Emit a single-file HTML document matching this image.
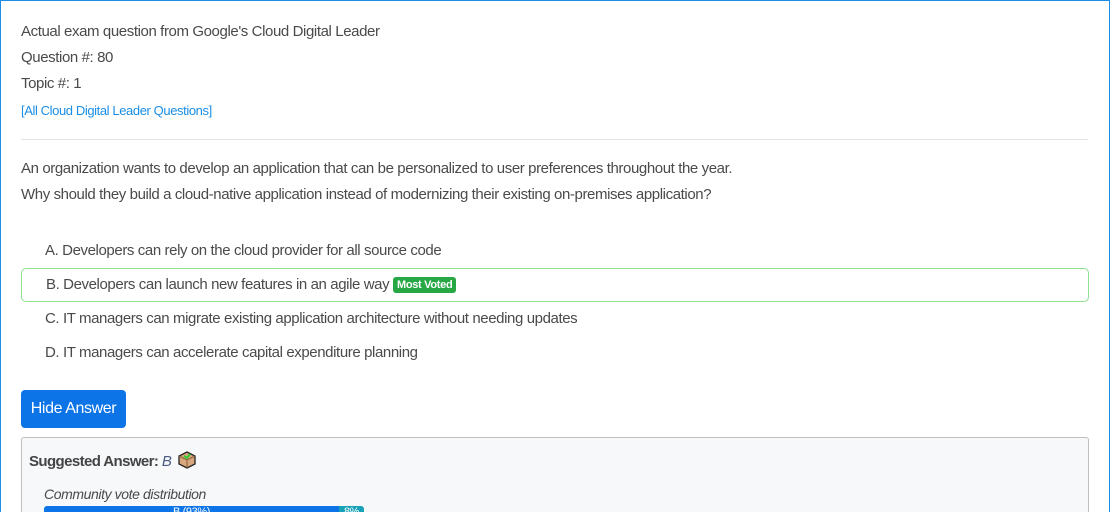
<!DOCTYPE html>
<html><head><meta charset="utf-8"><style>
*{margin:0;padding:0;box-sizing:border-box}
html,body{width:1110px;height:512px;overflow:hidden;background:#fff}
body{font-family:"Liberation Sans",sans-serif;color:#4a4a4a;font-size:15px;letter-spacing:-0.4px;position:relative}
.frame{position:absolute;left:0;top:0;width:1110px;height:512px;border:1px solid #1a8ee6;border-bottom:none}
.t{position:absolute;white-space:nowrap;line-height:18px}
a{color:#1a8ee6;text-decoration:none}
.hr{position:absolute;left:21px;top:139px;width:1067px;height:1px;background:#e2e2e2}
.opt{position:absolute;left:21px;width:1068px;height:34px;line-height:34px;padding-left:24px;white-space:nowrap}
.sel{border:1px solid #8fe08f;border-radius:5px;line-height:32px}
.badge{display:inline-block;background:#28a745;color:#fff;font-weight:bold;font-size:11px;line-height:16px;padding:0 4px;border-radius:3px;vertical-align:1px;letter-spacing:-0.3px}
.btn{position:absolute;left:21px;top:390px;width:105px;height:38px;background:#0d74e8;border-radius:4px;color:#fff;font-size:16px;line-height:38px;text-align:center}
.box{position:absolute;left:21px;top:437px;width:1068px;height:75px;background:#f7f8fa;border:1px solid #bfbfbf;border-bottom:none;border-radius:3px 3px 0 0}
</style></head><body>
<div class="frame"></div>
<div class="t" style="left:21px;top:23px">Actual exam question from Google's Cloud Digital Leader</div>
<div class="t" style="left:21px;top:49px">Question #: 80</div>
<div class="t" style="left:21px;top:75px">Topic #: 1</div>
<div class="t" style="left:21px;top:102px;font-size:13px"><a>[All Cloud Digital Leader Questions]</a></div>
<div class="hr"></div>
<div class="t" style="left:21px;top:160px">An organization wants to develop an application that can be personalized to user preferences throughout the year.</div>
<div class="t" style="left:21px;top:186px">Why should they build a cloud-native application instead of modernizing their existing on-premises application?</div>
<div class="opt" style="top:234px">A. Developers can rely on the cloud provider for all source code</div>
<div class="opt sel" style="top:268px">B. Developers can launch new features in an agile way <span class="badge">Most Voted</span></div>
<div class="opt" style="top:302px">C. IT managers can migrate existing application architecture without needing updates</div>
<div class="opt" style="top:336px">D. IT managers can accelerate capital expenditure planning</div>
<div class="btn">Hide Answer</div>
<div class="box">
 <div class="t" style="left:7px;top:12px;font-weight:bold;color:#444;letter-spacing:-0.6px">Suggested Answer: <span style="font-weight:normal;font-style:italic;color:#4a5a80">B</span><svg style="vertical-align:-4px;margin-left:6px" width="20" height="20" viewBox="0 0 20 20"><path d="M10 2 L18 6 L18 14 L10 18 L2 14 L2 6Z" fill="#d9a77c" stroke="#222" stroke-width="1.3"/><path d="M2 6 L10 10 L18 6 M10 10 L10 18" fill="none" stroke="#8a6040" stroke-width="1"/><path d="M7 6 L10 8 L13 4" fill="none" stroke="#3c3" stroke-width="2"/></svg></div>
 <div class="t" style="left:22px;top:47px;font-style:italic;font-size:14px">Community vote distribution</div>
 <div style="position:absolute;left:22px;top:68px;width:295px;height:14px;background:#0d74e8;border-radius:3px 0 0 3px;color:#fff;font-size:11px;text-align:center;line-height:12px">B (93%)</div>
 <div style="position:absolute;left:317px;top:68px;width:25px;height:14px;background:#17a2b8;border-radius:0 3px 3px 0;color:#fff;font-size:11px;text-align:center;line-height:12px">8%</div>
</div>
</body></html>
